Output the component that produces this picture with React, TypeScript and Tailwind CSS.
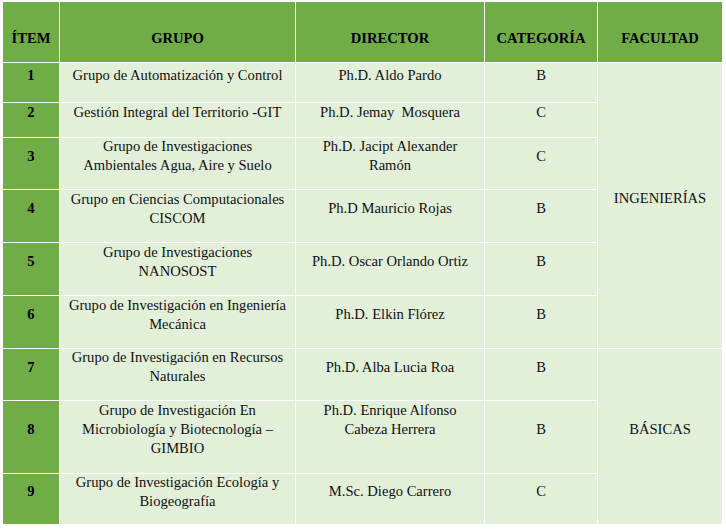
import React from "react";

type Row = {
  n: string;
  group: React.ReactNode;
  dir: React.ReactNode;
  cat: string;
  dirCls?: string;
};

const rows: Row[] = [
  { n: "1", group: <>Grupo de Automatización y Control</>, dir: <>Ph.D. Aldo Pardo</>, cat: "B" },
  { n: "2", group: <>Gestión Integral del Territorio -GIT</>, dir: <>Ph.D. Jemay{"\u00a0"} Mosquera</>, cat: "C" },
  { n: "3", group: <>Grupo de Investigaciones<br />Ambientales Agua, Aire y Suelo</>, dir: <>Ph.D. Jacipt Alexander<br />Ramón</>, cat: "C" },
  { n: "4", group: <>Grupo en Ciencias Computacionales<br />CISCOM</>, dir: <>Ph.D Mauricio Rojas</>, cat: "B" },
  { n: "5", group: <>Grupo de Investigaciones<br />NANOSOST</>, dir: <>Ph.D. Oscar Orlando Ortiz</>, cat: "B" },
  { n: "6", group: <>Grupo de Investigación en Ingeniería<br />Mecánica</>, dir: <>Ph.D. Elkin Flórez</>, cat: "B" },
  { n: "7", group: <>Grupo de Investigación en Recursos<br />Naturales</>, dir: <>Ph.D. Alba Lucia Roa</>, cat: "B" },
  { n: "8", group: <>Grupo de Investigación En<br />Microbiología y Biotecnología –<br />GIMBIO</>, dir: <>Ph.D. Enrique Alfonso<br />Cabeza Herrera</>, cat: "B", dirCls: "pb-[34px]" },
  { n: "9", group: <>Grupo de Investigación Ecología y<br />Biogeografía</>, dir: <>M.Sc. Diego Carrero</>, cat: "C" },
];

const serif = "font-['Liberation_Serif','Tinos','Times_New_Roman',serif]";
const head = `bg-[#70ad47] flex items-center justify-center pt-3 font-bold text-black ${serif}`;
const body = `bg-[#e2efd9] flex items-center justify-center text-center pb-[15px] whitespace-nowrap ${serif}`;

export default function App() {
  return (
    <div className={`w-[726px] h-[530px] bg-white pl-[3px] pt-[2px] ${serif}`}>
      <div className="grid w-[719px] gap-px bg-white grid-cols-[56px_235px_188px_112px_124px] grid-rows-[60px_39px_34px_51px_52px_52px_52px_51px_72px_50px] text-[14.6px] leading-[19px] text-[#111]">
        <div className={head}>ÍTEM</div>
        <div className={head}>GRUPO</div>
        <div className={head}>DIRECTOR</div>
        <div className={head}>CATEGORÍA</div>
        <div className={head}>FACULTAD</div>
        {rows.map((r, i) => (
          <React.Fragment key={r.n}>
            <div className={`bg-[#70ad47] flex items-center justify-center pb-[15px] font-bold text-black ${serif}`}>{r.n}</div>
            <div className={body}><div>{r.group}</div></div>
            <div className={`${body} ${r.dirCls ?? ""}`}><div>{r.dir}</div></div>
            <div className={body}>{r.cat}</div>
            {i === 0 && <div className={`${body} row-span-6`}>INGENIERÍAS</div>}
            {i === 6 && <div className={`${body} row-span-3`}>BÁSICAS</div>}
          </React.Fragment>
        ))}
      </div>
    </div>
  );
}
